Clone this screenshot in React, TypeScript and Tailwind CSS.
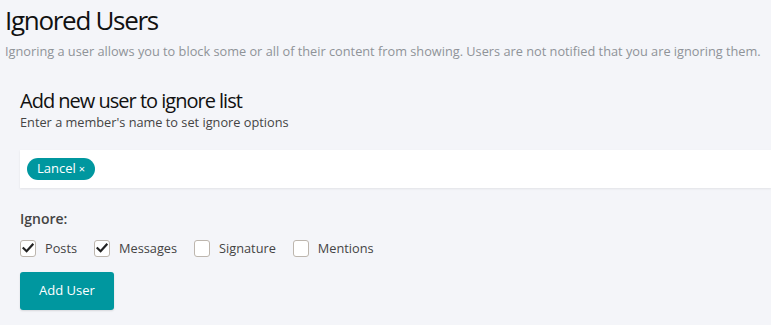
import { useState } from "react";

const options = [
  { label: "Posts", checked: true },
  { label: "Messages", checked: true },
  { label: "Signature", checked: false },
  { label: "Mentions", checked: false },
];

function Check({ checked }: { checked: boolean }) {
  return (
    <span className="flex h-[17px] w-[16px] items-center justify-center rounded-[3px] border border-[#bdb6ae] bg-white">
      {checked && (
        <svg width="12" height="12" viewBox="0 0 12 12">
          <path d="M1.5 6.2 L4.6 9.2 L10.6 2.6" fill="none" stroke="#222" strokeWidth="2.2" strokeLinecap="square" />
        </svg>
      )}
    </span>
  );
}

export default function App() {
  const [state, setState] = useState(options.map((o) => o.checked));

  return (
    <div
      className="h-[325px] w-[771px] overflow-hidden bg-[#f4f5f9]"
      style={{ fontFamily: '"Open Sans", sans-serif' }}
    >
      {/* header */}
      <div className="px-[5px] pt-[2px]">
        <h1 className="text-[26px] leading-[36px] tracking-[-0.05em] text-[#111]">Ignored Users</h1>
        <p className="mt-[4px] whitespace-nowrap text-[12.75px] leading-[18px] text-[#8f9398]">
          Ignoring a user allows you to block some or all of their content from showing. Users are not notified that you are ignoring them.
        </p>
      </div>

      {/* form */}
      <div className="pl-[20px] pt-[28px]">
        <h2 className="text-[20px] leading-[26px] tracking-[-0.05em] text-[#111]">Add new user to ignore list</h2>
        <p className="text-[12.75px] leading-[16px] text-[#444]">Enter a member's name to set ignore options</p>

        <div className="mt-[20px] flex h-[38px] items-center bg-white pl-[7px] shadow-[0_1px_2px_rgba(0,0,0,0.08)]">
          <span className="inline-flex h-[22px] items-center rounded-full bg-[#00979f] px-[10px] text-[13px] text-white">
            Lancel <span className="ml-[3px] text-[11px]">×</span>
          </span>
        </div>

        <div className="mt-[21px] text-[14px] font-semibold leading-[20px] text-[#444]">Ignore:</div>

        <div className="mt-[10px] flex items-center">
          {options.map((o, i) => (
            <label
              key={o.label}
              className="mr-[17px] flex cursor-pointer items-center gap-[9px] text-[12.75px] text-[#444]"
              onClick={() => setState((s) => s.map((v, j) => (j === i ? !v : v)))}
            >
              <Check checked={state[i]} />
              <span className="leading-[18px]">{o.label}</span>
            </label>
          ))}
        </div>

        <button
          type="button"
          className="mt-[15px] h-[38px] w-[94px] rounded-[3px] bg-[#00979f] text-[13px] text-white shadow-[0_1px_2px_rgba(0,0,0,0.12)]"
        >
          Add User
        </button>
      </div>
    </div>
  );
}
